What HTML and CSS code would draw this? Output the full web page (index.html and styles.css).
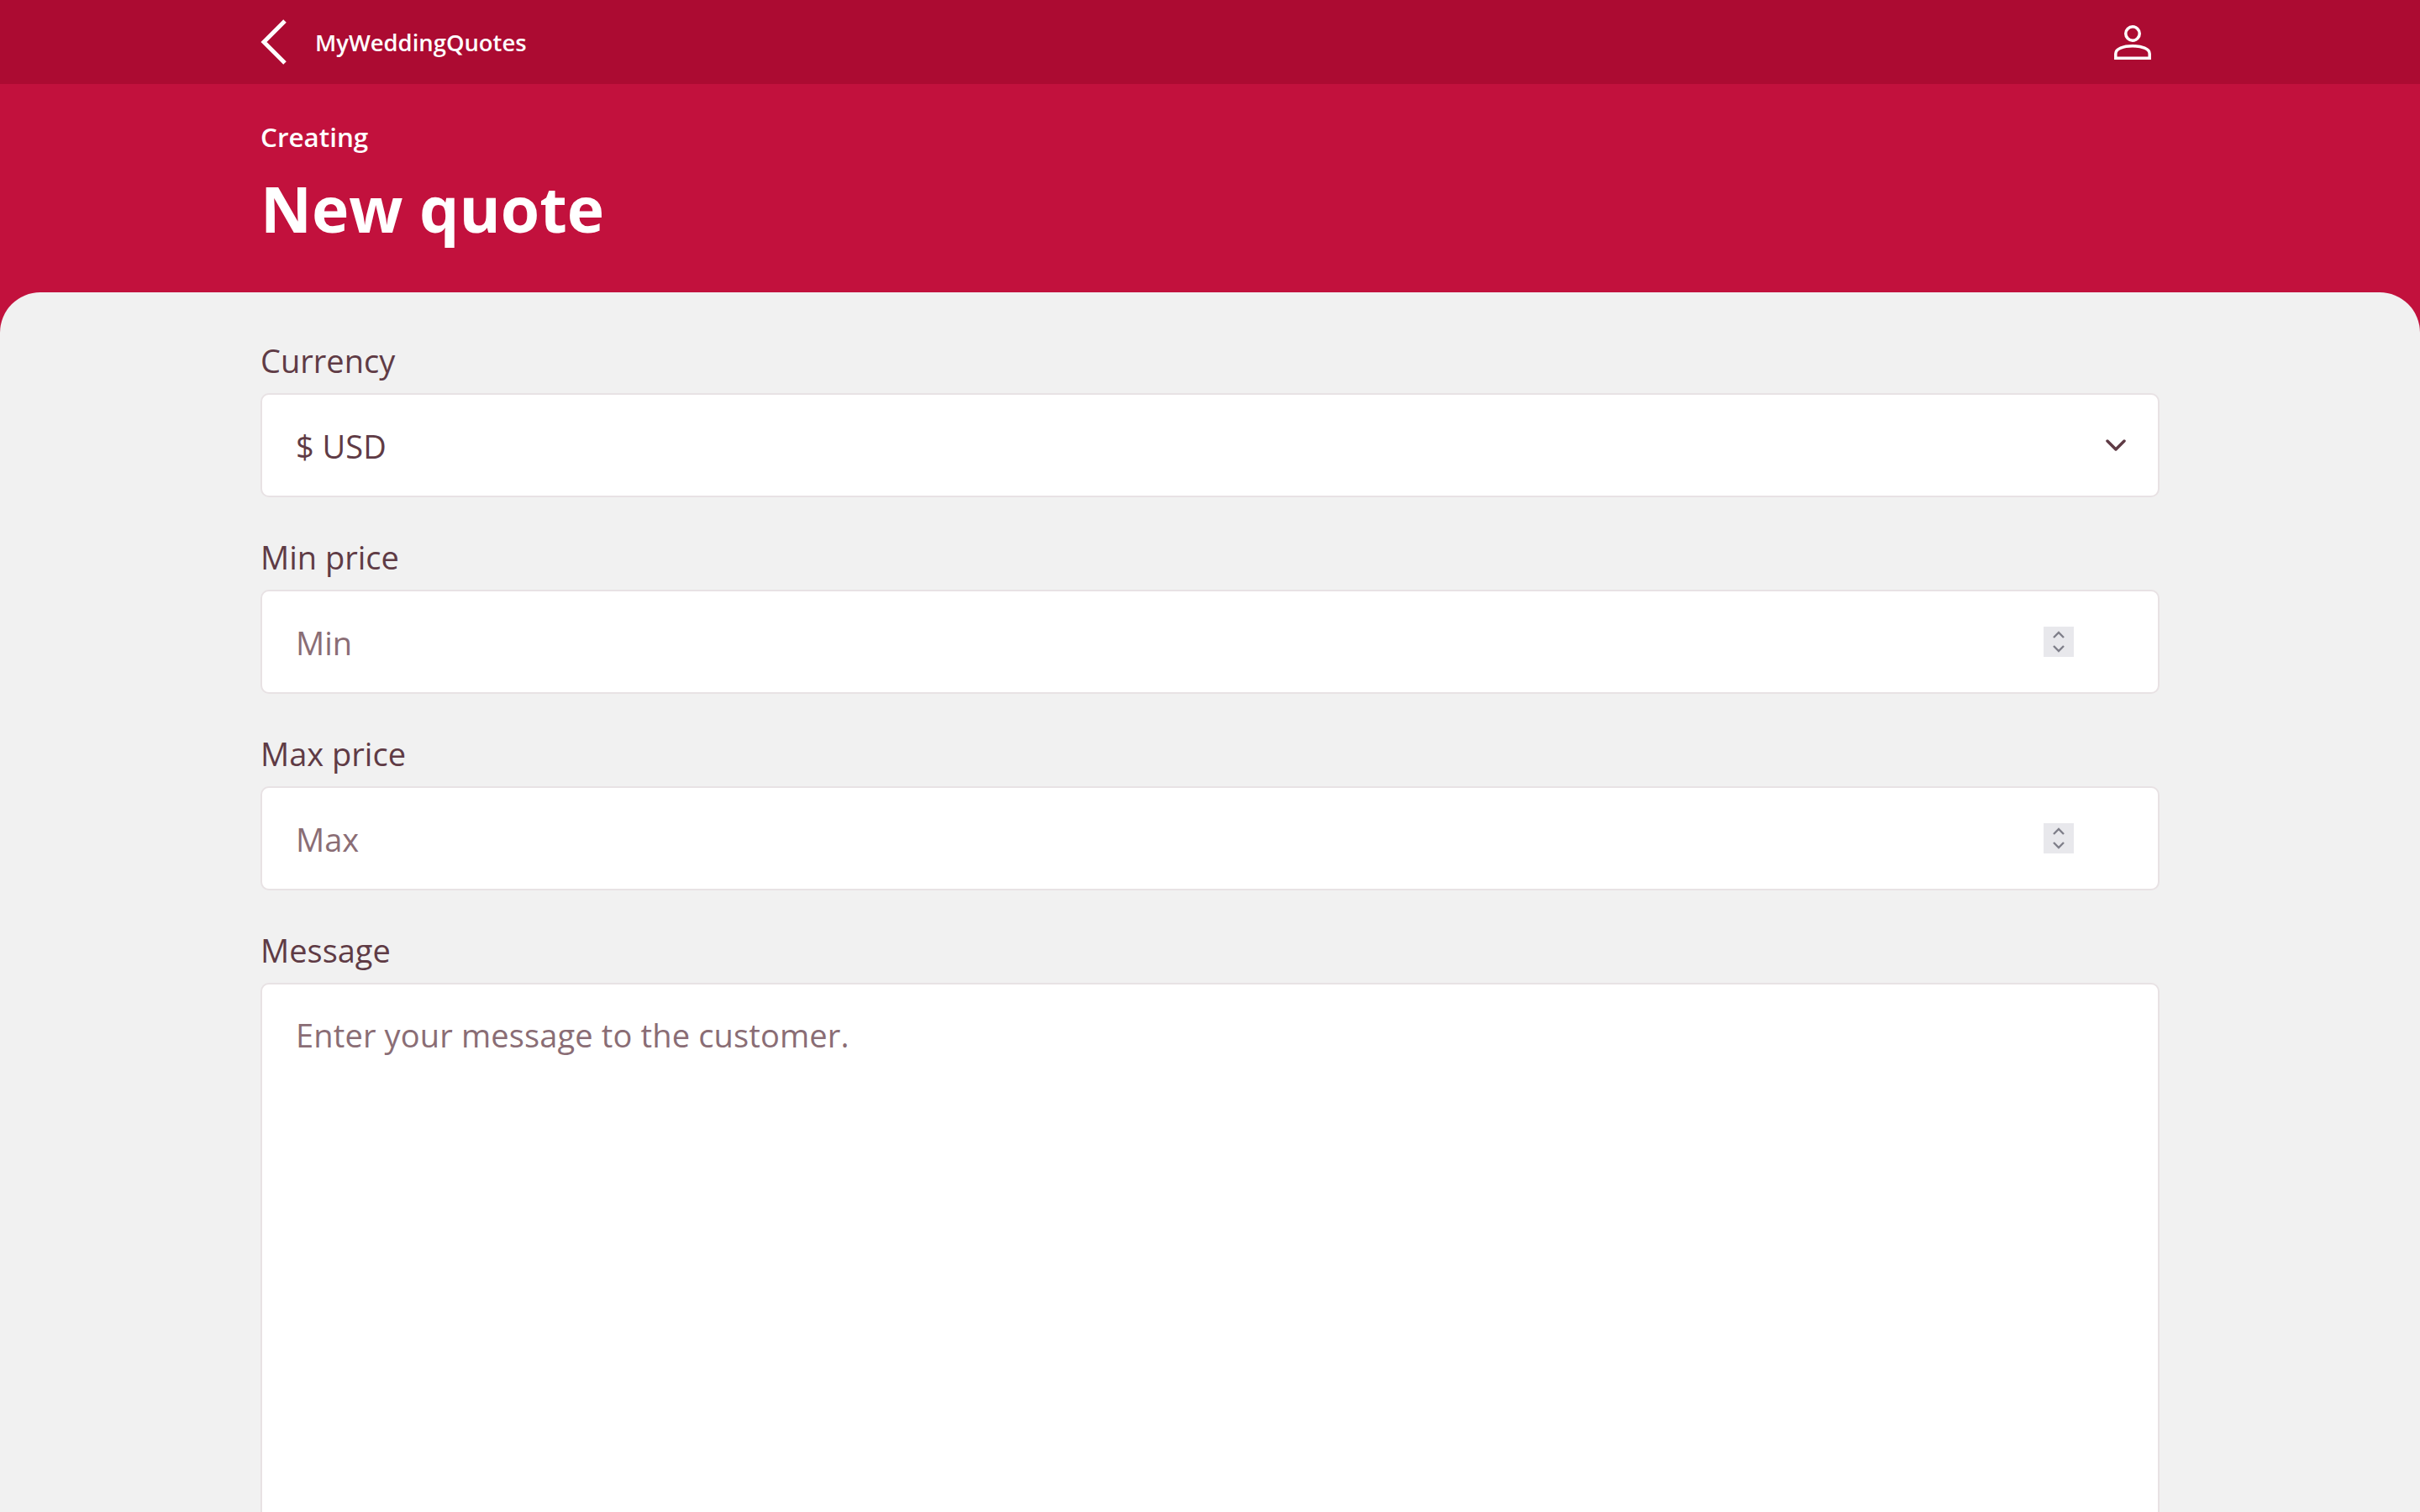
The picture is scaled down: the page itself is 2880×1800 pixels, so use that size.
FILE: index.html
```html
<!DOCTYPE html>
<html lang="en">
<head>
<meta charset="utf-8">
<title>New quote</title>
<link rel="stylesheet" href="styles.css">
</head>
<body>
<header class="topbar">
  <div class="wrap topbar-row">
    <div class="brand">
      <svg class="back" width="32" height="54" viewBox="0 0 32 54"><path d="M29 2 L4 27 L29 52" fill="none" stroke="#fff" stroke-width="5"/></svg>
      <span class="brand-name">MyWeddingQuotes</span>
    </div>
    <svg class="user" width="44" height="41" viewBox="0 0 44 41"><circle cx="22" cy="10" r="8.25" fill="none" stroke="#fff" stroke-width="3.5"/><path d="M1.8 39.2 V34 C1.8 28 11 24.8 22 24.8 C33 24.8 42.2 28 42.2 34 V39.2 Z" fill="none" stroke="#fff" stroke-width="3.5"/></svg>
  </div>
</header>
<section class="hero">
  <div class="wrap">
    <div class="eyebrow">Creating</div>
    <h1 class="title">New quote</h1>
  </div>
</section>
<main class="sheet">
  <form class="wrap form">
    <div class="field">
      <label class="label">Currency</label>
      <div class="control select"><span class="value">$ USD</span>
        <svg class="chev" width="24" height="14" viewBox="0 0 24 14"><path d="M2 2 L12 12 L22 2" fill="none" stroke="#5f3b45" stroke-width="3.5" stroke-linecap="round" stroke-linejoin="round"/></svg>
      </div>
    </div>
    <div class="field">
      <label class="label">Min price</label>
      <div class="control"><span class="placeholder">Min</span>
        <span class="spin"><svg width="36" height="36" viewBox="0 0 36 36"><path d="M12 13 L18 7 L24 13 M12 23 L18 29 L24 23" fill="none" stroke="#7f7f8a" stroke-width="2.4"/></svg></span>
      </div>
    </div>
    <div class="field">
      <label class="label">Max price</label>
      <div class="control"><span class="placeholder">Max</span>
        <span class="spin"><svg width="36" height="36" viewBox="0 0 36 36"><path d="M12 13 L18 7 L24 13 M12 23 L18 29 L24 23" fill="none" stroke="#7f7f8a" stroke-width="2.4"/></svg></span>
      </div>
    </div>
    <div class="field">
      <label class="label">Message</label>
      <div class="control area"><span class="placeholder message">Enter your message to the customer.</span></div>
    </div>
  </form>
</main>
</body>
</html>
```

FILE: styles.css
```css
* { box-sizing: border-box; }
html, body { margin: 0; height: 100%; overflow: hidden; }
body { background: #c2113d; font-family: "Open Sans", "Noto Sans", sans-serif; color: #5f3b45; }
.wrap { width: 2260px; margin: 0 0 0 310px; }
.topbar { height: 100px; background: #ac0b32; }
.topbar-row { height: 100px; display: flex; align-items: center; justify-content: space-between; }
.brand { display: flex; align-items: center; gap: 33px; }
.back { display: block; }
.brand-name { font-size: 27.4px; font-weight: 600; color: #fff; }
.user { margin-right: 10px; margin-top: 1px; }
.hero { height: 248px; padding-top: 43px; color: #fff; }
.eyebrow { font-size: 31.4px; font-weight: 600; line-height: 40px; }
.title { margin: 15px 0 0; font-size: 75px; font-weight: 700; line-height: 100px; }
.sheet { height: 1452px; background: #f1f1f1; border-radius: 48px 48px 0 0; }
.form { padding-top: 56px; display: flex; flex-direction: column; gap: 46px; }
.field { display: flex; flex-direction: column; gap: 14px; }
.label { font-size: 38px; line-height: 50px; }
.control { height: 124px; background: #fff; border: 2px solid #e8e2e4; border-radius: 10px; padding: 1px 40px 0; display: flex; align-items: center; justify-content: space-between; font-size: 38px; }
.placeholder { color: #8a6d75; }
.message { letter-spacing: 0.15px; }
.select .chev { margin-right: -2px; margin-top: -1px; }
.spin { width: 36px; height: 36px; background: #e8e8ec; margin-right: 60px; margin-top: -1px; display: block; }
.spin svg { display: block; }
.area { height: 1000px; align-items: flex-start; padding-top: 34px; }
```
